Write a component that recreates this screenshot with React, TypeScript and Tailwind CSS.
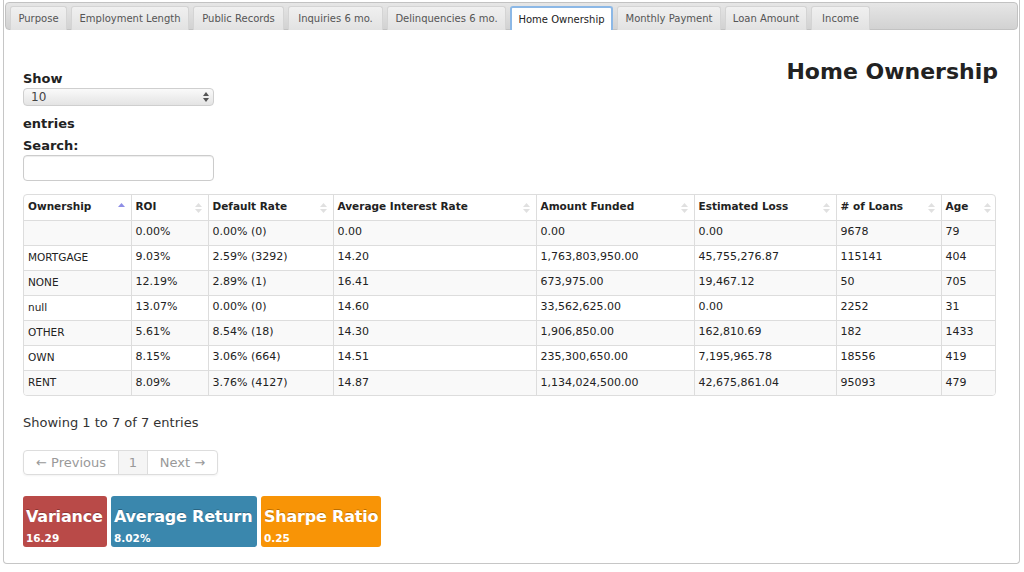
import React from 'react';

const tabs = [
  { label: "Purpose", width: "w-[57px]" },
  { label: "Employment Length", width: "w-[118px]" },
  { label: "Public Records", width: "w-[91px]" },
  { label: "Inquiries 6 mo.", width: "w-[95px]" },
  { label: "Delinquencies 6 mo.", width: "w-[119px]" },
  { label: "Home Ownership", width: "w-[103px]" },
  { label: "Monthly Payment", width: "w-[104px]" },
  { label: "Loan Amount", width: "w-[82px]" },
  { label: "Income", width: "w-[59px]" },
];

const columns = [
  { label: "Ownership", width: "w-[107px]", sorted: true },
  { label: "ROI", width: "w-[77px]" },
  { label: "Default Rate", width: "w-[125px]" },
  { label: "Average Interest Rate", width: "w-[203px]" },
  { label: "Amount Funded", width: "w-[158px]" },
  { label: "Estimated Loss", width: "w-[142px]" },
  { label: "# of Loans", width: "w-[105px]" },
  { label: "Age", width: "w-[56px]" },
];

const rows = [
  ["", "0.00%", "0.00% (0)", "0.00", "0.00", "0.00", "9678", "79"],
  ["MORTGAGE", "9.03%", "2.59% (3292)", "14.20", "1,763,803,950.00", "45,755,276.87", "115141", "404"],
  ["NONE", "12.19%", "2.89% (1)", "16.41", "673,975.00", "19,467.12", "50", "705"],
  ["null", "13.07%", "0.00% (0)", "14.60", "33,562,625.00", "0.00", "2252", "31"],
  ["OTHER", "5.61%", "8.54% (18)", "14.30", "1,906,850.00", "162,810.69", "182", "1433"],
  ["OWN", "8.15%", "3.06% (664)", "14.51", "235,300,650.00", "7,195,965.78", "18556", "419"],
  ["RENT", "8.09%", "3.76% (4127)", "14.87", "1,134,024,500.00", "42,675,861.04", "95093", "479"],
];

const stats = [
  { title: "Variance", value: "16.29", bg: "bg-[#b94a48]", width: "w-[84px]" },
  { title: "Average Return", value: "8.02%", bg: "bg-[#3a87ad]", width: "w-[146px]" },
  { title: "Sharpe Ratio", value: "0.25", bg: "bg-[#f89406]", width: "w-[120px]" },
];

const SortIcon = ({ active }: { active?: boolean }) =>
  active ? (
    <svg width="7" height="9" viewBox="0 0 7 9" className="absolute right-[6px] top-[8px]">
      <path d="M0 4 L3.5 0 L7 4 Z" fill="#8e8ee6" />
    </svg>
  ) : (
    <svg width="7" height="10" viewBox="0 0 7 10" className="absolute right-[6px] top-[8px]">
      <path d="M0 4 L3.5 0 L7 4 Z" fill="#e0e0e0" />
      <path d="M0 6 L3.5 10 L7 6 Z" fill="#e0e0e0" />
    </svg>
  );

export default function App() {
  return (
    <div className="w-[1024px] h-[572px] bg-white font-['DejaVu_Sans',Verdana,sans-serif] text-[#222]">
      <div className="ml-[3px] w-[1017px] h-[564px] border-x border-b border-[#c6c6c6] rounded-b-[4px] pt-[2px]">
        {/* tab bar */}
        <div className="mx-[1px] h-[28px] border border-[#c2c2c2] rounded-[4px] bg-gradient-to-b from-[#e6e6e6] to-[#d2d2d2] flex items-end gap-[4px] pl-[4px]">
          {tabs.map((tab) => {
            const active = tab.label === "Home Ownership";
            return (
              <div
                key={tab.label}
                className={
                  active
                    ? `${tab.width} h-[24px] flex items-center justify-center whitespace-nowrap text-[10px] text-[#222] bg-white border-2 border-b-0 border-[#8cb8e6] rounded-t-[3px] mb-[-1px]`
                    : `${tab.width} h-[24px] flex items-center justify-center whitespace-nowrap text-[10px] text-[#555] bg-gradient-to-b from-[#f0f0f0] to-[#e2e2e2] border border-b-0 border-[#d4d4d4] rounded-t-[3px] mb-[-1px]`
                }
              >
                {tab.label}
              </div>
            );
          })}
        </div>

        {/* content */}
        <div className="pl-[19px] pr-[22px] pt-[29px]">
          <div className="flex justify-between">
            <div className="pt-[11px] w-[191px]">
              <div className="text-[13px] font-bold leading-[18px]">Show</div>
              <div className="h-[18px] rounded-[4px] border border-[#cfcfcf] bg-gradient-to-b from-[#fafafa] to-[#e4e4e4] flex items-center justify-between pl-[7px] pr-[4px]">
                <span className="text-[12px] text-[#444]">10</span>
                <svg width="6" height="10" viewBox="0 0 6 10">
                  <path d="M0 4 L3 0 L6 4 Z" fill="#555" />
                  <path d="M0 6 L3 10 L6 6 Z" fill="#555" />
                </svg>
              </div>
              <div className="mt-[9px] text-[13px] font-bold leading-[18px]">entries</div>
              <div className="mt-[4px] text-[13px] font-bold leading-[18px]">Search:</div>
              <div className="h-[26px] rounded-[4px] border border-[#cccccc] bg-white shadow-[inset_0_1px_1px_rgba(0,0,0,0.075)]" />
            </div>
            <h2 className="text-[22px] font-bold leading-[26px] text-[#222] mr-[-1px]">Home Ownership</h2>
          </div>

          {/* table */}
          <div className="mt-[13px] w-[973px] border border-[#dddddd] rounded-[4px] overflow-hidden">
            <table className="w-full border-collapse text-[11px] table-fixed">
              <thead>
                <tr className="h-[25px]">
                  {columns.map((c, i) => (
                    <th
                      key={c.label}
                      className={`${c.width} relative text-left font-bold text-[10.5px] pl-[4px] ${i > 0 ? "border-l border-[#dddddd]" : ""}`}
                    >
                      {c.label}
                      <SortIcon active={c.sorted} />
                    </th>
                  ))}
                </tr>
              </thead>
              <tbody>
                {rows.map((r, ri) => (
                  <tr key={ri} className={`h-[25px] ${ri % 2 === 0 ? "bg-[#f9f9f9]" : "bg-white"}`}>
                    {r.map((cell, ci) => (
                      <td
                        key={ci}
                        className={`pl-[4px] border-t border-[#dddddd] ${ci > 0 ? "border-l" : ""} ${ci === 0 ? "text-[10.5px]" : ""}`}
                      >
                        {cell}
                      </td>
                    ))}
                  </tr>
                ))}
              </tbody>
            </table>
          </div>

          <div className="mt-[18px] text-[13px] leading-[18px] text-[#333]">Showing 1 to 7 of 7 entries</div>

          {/* pagination */}
          <div className="mt-[18px] inline-flex h-[25px] border border-[#dddddd] rounded-[4px] text-[13px] text-[#999] shadow-[0_1px_2px_rgba(0,0,0,0.05)]">
            <div className="w-[94px] flex items-center justify-center">← Previous</div>
            <div className="w-[30px] flex items-center justify-center bg-[#f5f5f5] border-x border-[#dddddd]">1</div>
            <div className="w-[69px] flex items-center justify-center">Next →</div>
          </div>

          {/* stats */}
          <div className="mt-[21px] flex gap-[4px]">
            {stats.map((s) => (
              <div
                key={s.title}
                className={`${s.bg} ${s.width} h-[51px] rounded-[3px] text-white pl-[3px] pt-[11px] overflow-hidden whitespace-nowrap`}
              >
                <div className="text-[16px] font-bold leading-[20px] [text-shadow:0_-1px_0_rgba(0,0,0,0.25)] tracking-[-0.2px]">
                  {s.title}
                </div>
                <div className="text-[10.5px] font-bold leading-[14px] mt-[4px]">{s.value}</div>
              </div>
            ))}
          </div>
        </div>
      </div>
    </div>
  );
}
